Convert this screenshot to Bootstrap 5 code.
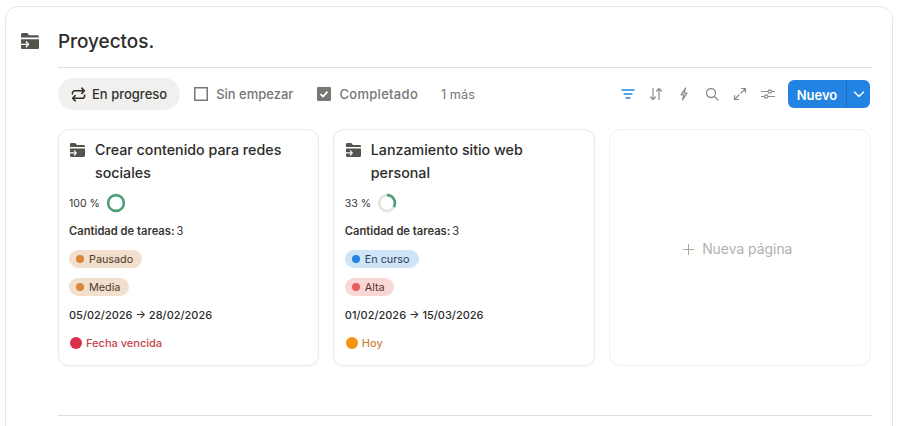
<!DOCTYPE html>
<html lang="es">
<head>
<meta charset="utf-8">
<title>Proyectos</title>
<link href="https://cdn.jsdelivr.net/npm/bootstrap@5.3.0/dist/css/bootstrap.min.css" rel="stylesheet">
<style>
html,body{height:426px;overflow:hidden;background:#fff;font-family:Inter,"Liberation Sans",sans-serif;color:#2c2c2b}
.shell{margin:6px 0 0 5px;width:888px;height:440px;border:1px solid #e6e6e5;border-radius:13px;padding:0 20px 0 14px}
.side-ico{width:20px;padding-left:1px;margin-top:26px;margin-right:18px;flex:none}
.side-ico svg,.card-head svg{display:block}
.main-col{width:814px;flex:none}
.head-title{font-size:18.9px;font-weight:500;line-height:24px;margin:0;padding-top:23px;padding-bottom:13px;border-bottom:1px solid #dfdfde;color:#2c2c2b}
.tabs-row{height:32px;margin-top:10px;margin-right:2px}
.tabs-row span,.tab-more{padding-top:1px}
.tab-pill{height:32px;border-radius:16px;background:#f1f0ef;padding:0 13px;font-size:13px;font-weight:500;color:#32302c;gap:6px}
.tab-plain{font-size:13px;font-weight:500;color:#787774;margin-left:14px}
.tab-done{margin-left:24px;letter-spacing:.3px}
.tab-more{font-size:12.75px;color:#787774;margin-left:23px}
.tool-set{gap:14px}
.tool-ico{display:block}
.new-btn{height:28px;border-radius:6px;background:#2383e2;color:#fff;overflow:hidden;font-size:13px;font-weight:600;margin-left:-1px}
.new-main{width:58px;text-align:center;line-height:30px}
.new-caret{width:24px;height:28px;border-left:1px solid #1c70c4}
.cards-row{margin-top:19px;margin-left:-.4px;gap:14px;margin-right:1px}
.proj-card{flex:1 1 0;height:237px;border:1px solid #ebebea;border-radius:11px;box-shadow:0 1px 2px rgba(0,0,0,.04);padding:8px 10px 8px 10.4px;background:#fff;min-width:0}
.card-head{font-size:14.25px;font-weight:500;line-height:23px;color:#2c2c2b;padding-right:12px;margin-bottom:5px}
.card-head svg{flex:none;margin:5px 10px 0 1px}
.info-row{height:28px}
.pct-line{font-size:10.5px;color:#373530;padding-top:1px}
.pct-line svg{margin:-1px 0 0 6px}
.task-line{font-size:11.2px;font-weight:600;color:#373530;padding-top:1px}
.task-line span{font-weight:400;margin-left:2px}
.tag-pill{height:18px;border-radius:9px;font-size:10.8px;padding:1px 9px 0 7px;line-height:17px;display:inline-flex;align-items:center;gap:5px;color:#4f3a28}
.tag-dot{width:8px;height:8px;border-radius:50%;display:block;flex:none;margin-top:-2px}
.t-orange{background:#f3dfcd}.t-orange .tag-dot{background:#d9853c}
.t-blue{background:#cfe4f7;color:#26405c}.t-blue .tag-dot{background:#2383e2}
.t-red{background:#f8d7d4;color:#5c2f2c}.t-red .tag-dot{background:#e85c5c}
.date-line{font-size:11px;font-weight:500;color:#2c2c2b;padding-top:1px}
.alert-line{font-size:11px;font-weight:500;gap:4px}
.alert-dot{width:12px;height:12px;border-radius:50%;margin-left:1px;flex:none}
.al-red{color:#c4444c}.al-red .alert-dot{background:#dc2f4a}
.al-or{color:#c9823e}.al-or .alert-dot{background:#f59311}
.new-card{box-shadow:none;border-color:#f0f0ef;color:#b3b1ad;font-size:13.9px;gap:8px;background:#fff;padding-top:11px}
.new-card span{margin-right:5px}
.foot-rule{margin-top:49px;border-top:1px solid #dfdfde;height:1px}
</style>
</head>
<body>
<div class="shell d-flex">
  <div class="side-ico">
    <svg width="18" height="16" viewBox="1 2 18 14" preserveAspectRatio="none" aria-hidden="true"><path fill="#55534e" d="M1 3.500C1 2.700 1.600 2 2.400 2h4.400c.5 0 .9.2 1.200.6L9.200 4H17.600c.8 0 1.400.6 1.400 1.400V6H1zM1 7.500H19v7.100c0 .8-.6 1.400-1.400 1.400H2.400C1.600 16 1 15.400 1 14.600V12.500h6l-1.500 1.500.9.9 3-3-3-3-.9.9 1.500 1.500H1z"/></svg>
  </div>
  <div class="main-col">
    <h1 class="head-title">Proyectos.</h1>
    <div class="tabs-row d-flex align-items-center">
      <div class="tab-pill d-flex align-items-center">
        <svg width="15" height="15" viewBox="0 0 16 16" fill="none" stroke="#32302c" stroke-width="1.600" stroke-linecap="round" stroke-linejoin="round" aria-hidden="true"><path d="M1.500 7.500V6.500a2.500 2.500 0 0 1 2.500-2.500h10M11.500 1.200 14.300 4l-2.800 2.800M14.500 8.500v1a2.500 2.500 0 0 1-2.500 2.500H2M4.500 9.200 1.700 12l2.800 2.800"/></svg>
        <span>En progreso</span>
      </div>
      <div class="tab-plain d-flex align-items-center gap-2">
        <svg width="14" height="14" viewBox="0 0 14 14" fill="none" aria-hidden="true"><rect x=".75" y=".75" width="12.500" height="12.500" stroke="#787774" stroke-width="1.500"/></svg>
        <span>Sin empezar</span>
      </div>
      <div class="tab-plain tab-done d-flex align-items-center gap-2">
        <svg width="14" height="14" viewBox="0 0 14 14" aria-hidden="true"><rect width="14" height="14" rx="1" fill="#787774"/><path d="M3.500 7.200 6 9.500l4.500-4.800" fill="none" stroke="#fff" stroke-width="1.800"/></svg>
        <span>Completado</span>
      </div>
      <div class="tab-more">1 más</div>
      <div class="ms-auto d-flex align-items-center tool-set">
        <svg class="tool-ico" width="14" height="14" viewBox="0 0 14 14" fill="none" stroke="#2383e2" stroke-width="1.400" stroke-linecap="round" aria-hidden="true"><path d="M1 3h12M3 7h8M5 11h4"/></svg>
        <svg class="tool-ico" width="14" height="14" viewBox="0 0 14 14" fill="none" stroke="#8d8c88" stroke-width="1.200" stroke-linecap="round" stroke-linejoin="round" aria-hidden="true"><path d="M4 1.500V12.500M1.500 10 4 12.500 6.500 10M10 12.500V1.500M7.500 4 10 1.500 12.500 4"/></svg>
        <svg class="tool-ico" width="14" height="14" viewBox="0 0 14 14" fill="none" stroke="#8d8c88" stroke-width="1.200" stroke-linejoin="round" aria-hidden="true"><path d="M8.500 1 4 7.800h3L5.500 13 10 6.200H7z"/></svg>
        <svg class="tool-ico" width="14" height="14" viewBox="0 0 14 14" fill="none" stroke="#8d8c88" stroke-width="1.300" stroke-linecap="round" aria-hidden="true"><circle cx="6" cy="6" r="4.500"/><path d="M9.500 9.500 13 13"/></svg>
        <svg class="tool-ico" width="14" height="14" viewBox="0 0 14 14" fill="none" stroke="#8d8c88" stroke-width="1.200" stroke-linecap="round" stroke-linejoin="round" aria-hidden="true"><path d="M8 6 12.500 1.500M8.500 1.500h4v4M6 8 1.500 12.500M1.500 8.500v4h4"/></svg>
        <svg class="tool-ico" width="14" height="14" viewBox="0 0 14 14" fill="none" stroke="#8d8c88" stroke-width="1.200" aria-hidden="true"><path d="M0 4.500h7M10.500 4.500H14M0 9.500H3.500M7 9.500h7"/><circle cx="8.800" cy="4.500" r="1.700"/><circle cx="5.200" cy="9.500" r="1.700"/></svg>
        <div class="new-btn d-flex">
          <div class="new-main">Nuevo</div>
          <div class="new-caret d-flex align-items-center justify-content-center">
            <svg width="12" height="12" viewBox="0 0 12 12" fill="none" stroke="#fff" stroke-width="1.400" stroke-linecap="round" stroke-linejoin="round" aria-hidden="true"><path d="M1.500 4 6 8.500 10.500 4"/></svg>
          </div>
        </div>
      </div>
    </div>
    <div class="cards-row d-flex">
      <div class="proj-card">
        <div class="card-head d-flex">
          <svg width="15" height="14" viewBox="1 2 18 14" preserveAspectRatio="none" aria-hidden="true"><path fill="#55534e" d="M1 3.500C1 2.700 1.600 2 2.400 2h4.400c.5 0 .9.2 1.200.6L9.200 4H17.600c.8 0 1.400.6 1.400 1.400V6H1zM1 7.500H19v7.100c0 .8-.6 1.400-1.400 1.400H2.400C1.600 16 1 15.400 1 14.600V12.500h6l-1.500 1.500.9.9 3-3-3-3-.9.9 1.500 1.500H1z"/></svg>
          <div>Crear contenido para redes sociales</div>
        </div>
        <div class="info-row pct-line d-flex align-items-center">100 %
          <svg width="20" height="20" viewBox="0 0 20 20" fill="none" aria-hidden="true"><circle cx="10" cy="10" r="7.900" stroke="#4b9e75" stroke-width="2.600"/></svg>
        </div>
        <div class="info-row task-line d-flex align-items-center">Cantidad de tareas:<span>3</span></div>
        <div class="info-row d-flex align-items-center"><span class="tag-pill t-orange"><i class="tag-dot"></i>Pausado</span></div>
        <div class="info-row d-flex align-items-center"><span class="tag-pill t-orange"><i class="tag-dot"></i>Media</span></div>
        <div class="info-row date-line d-flex align-items-center">05/02/2026 → 28/02/2026</div>
        <div class="info-row alert-line al-red d-flex align-items-center"><i class="alert-dot"></i>Fecha vencida</div>
      </div>
      <div class="proj-card">
        <div class="card-head d-flex">
          <svg width="15" height="14" viewBox="1 2 18 14" preserveAspectRatio="none" aria-hidden="true"><path fill="#55534e" d="M1 3.500C1 2.700 1.600 2 2.400 2h4.400c.5 0 .9.2 1.200.6L9.200 4H17.600c.8 0 1.400.6 1.400 1.400V6H1zM1 7.500H19v7.100c0 .8-.6 1.400-1.400 1.400H2.400C1.600 16 1 15.400 1 14.600V12.500h6l-1.500 1.500.9.9 3-3-3-3-.9.9 1.500 1.500H1z"/></svg>
          <div>Lanzamiento sitio web personal</div>
        </div>
        <div class="info-row pct-line d-flex align-items-center">33 %
          <svg width="20" height="20" viewBox="0 0 20 20" fill="none" aria-hidden="true"><circle cx="10" cy="10" r="7.900" stroke="#e4e4e2" stroke-width="2.600"/><path d="M10 2.100A7.900 7.900 0 0 1 16.800 14" stroke="#4b9e75" stroke-width="2.600"/></svg>
        </div>
        <div class="info-row task-line d-flex align-items-center">Cantidad de tareas:<span>3</span></div>
        <div class="info-row d-flex align-items-center"><span class="tag-pill t-blue"><i class="tag-dot"></i>En curso</span></div>
        <div class="info-row d-flex align-items-center"><span class="tag-pill t-red"><i class="tag-dot"></i>Alta</span></div>
        <div class="info-row date-line d-flex align-items-center">01/02/2026 → 15/03/2026</div>
        <div class="info-row alert-line al-or d-flex align-items-center"><i class="alert-dot"></i>Hoy</div>
      </div>
      <div class="proj-card new-card d-flex align-items-center justify-content-center">
        <svg width="11" height="11" viewBox="0 0 11 11" fill="none" stroke="#a8a6a2" stroke-width="1" aria-hidden="true"><path d="M5.500 0V11M0 5.500H11"/></svg>
        <span>Nueva página</span>
      </div>
    </div>
    <div class="foot-rule"></div>
  </div>
</div>
</body>
</html>
